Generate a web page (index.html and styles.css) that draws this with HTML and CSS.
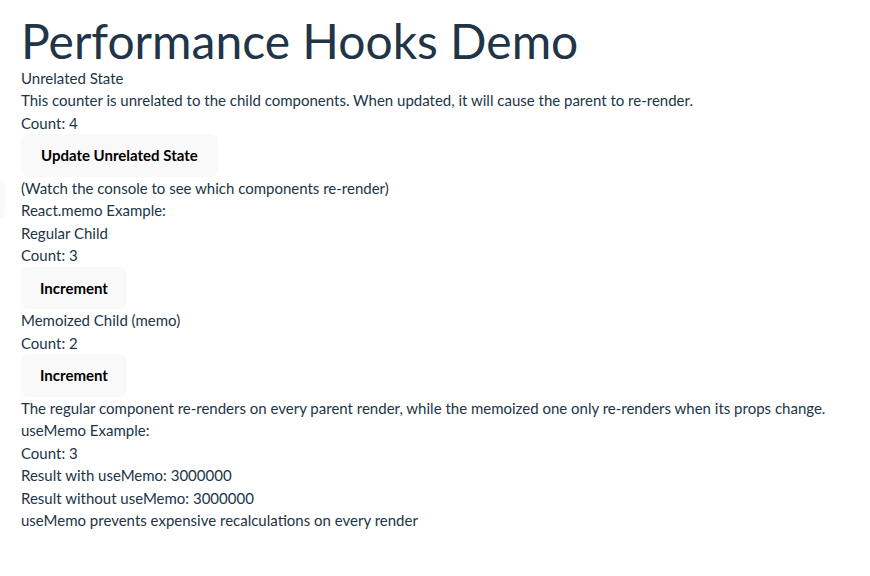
FILE: index.html
```html
<!DOCTYPE html>
<html lang="en">
<head>
<meta charset="utf-8">
<title>Performance Hooks Demo</title>
<link rel="stylesheet" href="styles.css">
</head>
<body>
<div class="edge-btn"></div>
<div class="app">
  <h1 class="title">Performance Hooks Demo</h1>
  <section class="block">
    <div class="line">Unrelated State</div>
    <p class="line">This counter is unrelated to the child components. When updated, it will cause the parent to re-render.</p>
    <p class="line">Count: 4</p>
    <div><button class="btn btn-wide">Update Unrelated State</button></div>
    <p class="line">(Watch the console to see which components re-render)</p>
  </section>
  <section class="block">
    <div class="line">React.memo Example:</div>
    <div class="child">
      <div class="line">Regular Child</div>
      <p class="line">Count: 3</p>
      <div><button class="btn">Increment</button></div>
    </div>
    <div class="child">
      <div class="line">Memoized Child (memo)</div>
      <p class="line">Count: 2</p>
      <div><button class="btn">Increment</button></div>
    </div>
    <p class="line">The regular component re-renders on every parent render, while the memoized one only re-renders when its props change.</p>
  </section>
  <section class="block">
    <div class="line">useMemo Example:</div>
    <p class="line">Count: 3</p>
    <p class="line">Result with useMemo: 3000000</p>
    <p class="line">Result without useMemo: 3000000</p>
    <p class="line">useMemo prevents expensive recalculations on every render</p>
  </section>
</div>
</body>
</html>
```
FILE: styles.css
```css
html, body {
  margin: 0;
  padding: 0;
  background: #ffffff;
}
body {
  font-family: "Lato", "Roboto", sans-serif;
  font-size: 15px;
  line-height: 1.5;
  color: #213547;
}
.app {
  display: flex;
  flex-direction: column;
  padding: 14px 21px;
}
.title {
  margin: 0;
  padding-top: 2px;
  font-size: 48px;
  line-height: 50.8px;
  font-weight: 400;
  color: #213547;
}
.block, .child {
  display: flex;
  flex-direction: column;
}
.line {
  margin: 0;
  white-space: nowrap;
}
.btn {
  font-family: inherit;
  font-size: 15px;
  line-height: 1.5;
  font-weight: 700;
  color: #000000;
  background: #f9f9f9;
  border: 1px solid transparent;
  border-radius: 8px;
  padding: 9px 18px;
  margin: 0;
  cursor: pointer;
}
.btn-wide {
  padding: 9px 19px;
}
.edge-btn {
  position: absolute;
  left: 0;
  top: 180px;
  width: 5px;
  height: 38px;
  background: #f9f9f9;
  border-radius: 0 8px 8px 0;
}
```
